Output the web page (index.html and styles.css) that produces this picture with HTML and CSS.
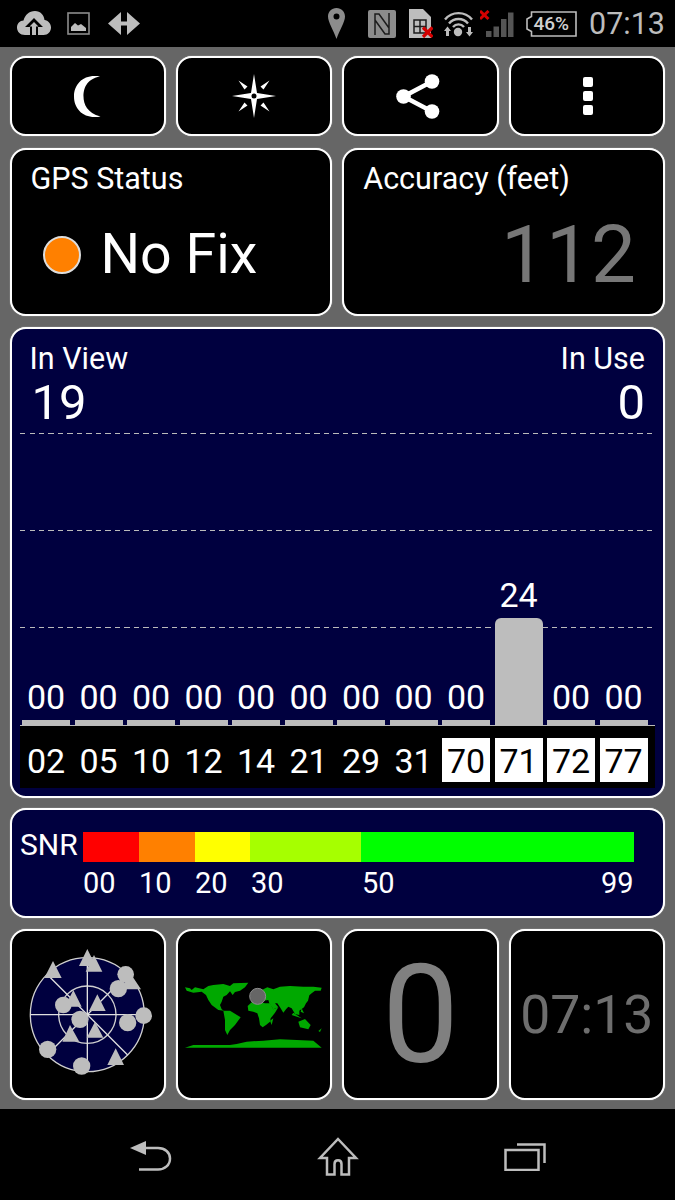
FILE: index.html
```html
<!DOCTYPE html>
<html lang="en">
<head>
  <meta charset="UTF-8" />
  <title>GPS Test</title>
  <link rel="stylesheet" href="styles.css">
</head>
<body>

<!-- Status bar -->
<div class="statusbar">
  <svg class="ic-cloud" width="34" height="24" viewBox="0 0 34 24"><path fill="#bdbdbd" d="M8 24C3 24 0 20.500 0 16.500C0 12.500 3 9.500 6.500 9.500C8 4 12 0 18 0C23.500 0 27 4 27.500 9C31 9.500 34 12.500 34 16.500C34 20.500 31 24 26.500 24Z"/><path fill="#000" d="M17 7L26 16H21V24H13V16H8Z"/><path fill="#bdbdbd" d="M15 24V15.500H12.500L17 11L21.500 15.500H19V24Z"/></svg>
  <svg class="ic-image" width="23" height="23" viewBox="0 0 23 23"><rect x="1" y="1" width="21" height="21" fill="none" stroke="#8c8c8c" stroke-width="1.600"/><path fill="#bdbdbd" d="M4 19V15L8 11L11 13.500L14 12L19 16V19Z"/></svg>
  <svg class="ic-arrows" width="32" height="23" viewBox="0 0 32 23"><path fill="#bdbdbd" d="M0 11.500L13 0V9.500H19V0L32 11.500L19 23V13.500H13V23Z"/></svg>
  <div class="status-right">
    <svg class="ic-pin" width="17" height="31" viewBox="0 0 17 31"><path fill="#8c8c8c" fill-rule="evenodd" d="M8.500 0C13.500 0 17 3.800 17 8.500C17 14 11.500 22 8.500 31C5.500 22 0 14 0 8.500C0 3.800 3.500 0 8.500 0ZM8.500 5.500A3 3 0 1 0 8.500 11.500A3 3 0 1 0 8.500 5.500Z"/></svg>
    <svg class="ic-nfc" width="28" height="28" viewBox="0 0 28 28"><rect width="28" height="28" rx="2" fill="#8c8c8c"/><path fill="none" stroke="#1c1c1c" stroke-width="1.500" d="M7 25V4H11L21 18M21 3V24H17L7 10"/></svg>
    <svg class="ic-sim" width="24" height="29" viewBox="0 0 24 29"><path fill="#bdbdbd" d="M0 0H14L22 8V29H0Z"/><path fill="none" stroke="#1c1c1c" stroke-width="1.500" d="M5 11H17V24H5ZM5 17.500H17M11 11V24"/><path fill="none" stroke="#d40000" stroke-width="3.200" d="M14 18.500L23.500 28M23.500 18.500L14 28"/></svg>
    <svg class="ic-wifi" width="29" height="26" viewBox="0 0 29 26"><g fill="none" stroke="#bdbdbd" stroke-width="2.400"><path d="M1 8.500C8 0 21 0 28 8.500"/><path d="M5 12.500C10 6.500 19 6.500 24 12.500"/><path d="M9 16C12 12.500 17 12.500 20 16"/></g><circle cx="14" cy="21" r="4.200" fill="#bdbdbd"/><path fill="#bdbdbd" d="M0 20L3.500 15.500L7 20H5V25H2V20ZM22 21H24V16H27V21H29L25.500 25.500Z"/></svg>
    <svg class="ic-signal" width="34" height="27" viewBox="0 0 34 27"><path stroke="#d40000" stroke-width="3" d="M0 1L8.500 9M8.500 1L0 9"/><g fill="#555"><rect x="6" y="21" width="5.500" height="6"/><rect x="13.500" y="16.500" width="5.500" height="10.500"/><rect x="21" y="9" width="5.500" height="18"/><rect x="28" y="2.500" width="5.500" height="24.500"/></g></svg>
    <div class="battery">
      <svg class="battery-shell" width="51" height="26" viewBox="0 0 51 26"><path fill="none" stroke="#bdbdbd" stroke-width="1.600" d="M5.500 1H50V25H5.500V20.500L1 18V8L5.500 5.500Z"/></svg>
      <span>46%</span>
    </div>
    <div class="clock">07:13</div>
  </div>
</div>

<div class="screen">

  <!-- Toolbar -->
  <div class="row-tools">
    <div class="card">
      <svg width="27" height="41" viewBox="0 0 27 41"><path fill="#fff" d="M26 0.500C12 3 9.500 13 9.500 20.500C9.500 28 13 37 26.500 40.500C25 41 23 41 20.500 41C8 41 0 32 0 20.500C0 9 8 0 20.500 0C23 0 24.500 0 26 0.500Z"/></svg>
    </div>
    <div class="card">
      <svg width="44" height="44" viewBox="0 0 44 44"><g fill="#fff"><path fill-rule="evenodd" d="M22 0L25 19L44 22L25 25L22 44L19 25L0 22L19 19ZM22 19.500A2.500 2.500 0 1 0 22 24.500A2.500 2.500 0 1 0 22 19.500Z"/><path d="M6.500 6.500L15.500 12.500L12.500 15.500ZM37.500 6.500L28.500 12.500L31.500 15.500ZM6.500 37.500L15.500 31.500L12.500 28.500ZM37.500 37.500L28.500 31.500L31.500 28.500Z"/></g></svg>
    </div>
    <div class="card">
      <svg class="ic-share" width="44" height="45" viewBox="0 0 44 45"><g fill="#fff"><circle cx="36" cy="7.500" r="7.300"/><circle cx="7.500" cy="22.500" r="7.300"/><circle cx="36" cy="37.500" r="7.300"/></g><path fill="none" stroke="#fff" stroke-width="4.500" d="M36 7.500L7.500 22.500L36 37.500"/></svg>
    </div>
    <div class="card">
      <div class="dots"><i></i><i></i><i></i></div>
    </div>
  </div>

  <!-- Status and accuracy -->
  <div class="row-info">
    <div class="card card-info">
      <div class="info-label">GPS Status</div>
      <div class="fix"><span class="fix-dot"></span><span class="fix-text">No Fix</span></div>
    </div>
    <div class="card card-info">
      <div class="info-label">Accuracy (feet)</div>
      <div class="accuracy">112</div>
    </div>
  </div>

  <!-- Signal chart -->
  <div class="card navy chart-panel">
    <div class="chart-head">
      <div class="head-col head-left"><span class="head-label">In View</span><span class="head-num">19</span></div>
      <div class="head-col head-right"><span class="head-label">In Use</span><span class="head-num">0</span></div>
    </div>
    <div class="grid-line gl1"></div>
    <div class="grid-line gl2"></div>
    <div class="grid-line gl3"></div>
    <div class="bars" id="bars"></div>
    <div class="labels" id="labels"></div>
  </div>

  <!-- SNR legend -->
  <div class="card navy snr-panel">
    <div class="snr-title">SNR</div>
    <div class="snr-body">
      <div class="snr-bar">
        <i class="seg s-red"></i><i class="seg s-orange"></i><i class="seg s-yellow"></i><i class="seg s-lime"></i><i class="seg s-green"></i>
      </div>
      <div class="snr-scale">
        <span class="tick t1">00</span><span class="tick t1">10</span><span class="tick t1">20</span><span class="tick t2">30</span><span class="tick t3">50</span><span class="tick">99</span>
      </div>
    </div>
  </div>

  <!-- Bottom tiles -->
  <div class="row-tiles">
    <div class="card">
      <svg class="sky" width="140" height="150" viewBox="0 0 420 450">
        <circle cx="202" cy="224" r="171" fill="#00003f" stroke="#d0d0d0" stroke-width="4"/>
        <circle cx="202" cy="224" r="86" fill="none" stroke="#d0d0d0" stroke-width="4"/>
        <path fill="none" stroke="#e0e0e0" stroke-width="4" d="M31 224H373M202 53V395M81 103L323 345M323 103L81 345"/>
        <g fill="#bdbdbd">
          <path d="M202 27L177 78H227ZM222 45L197 95H247ZM99 63L73 114H125ZM160 150L135 200H185ZM232 163L207 213H257ZM150 255L127 305H178ZM225 245L200 293H250ZM287 325L262 375H312ZM330 98L305 148H363Z"/>
          <circle cx="130" cy="195" r="25"/><circle cx="180" cy="238" r="26"/><circle cx="83" cy="328" r="26"/><circle cx="185" cy="378" r="26"/>
          <circle cx="323" cy="248" r="26"/><circle cx="371" cy="227" r="25"/><circle cx="317" cy="103" r="25"/><circle cx="295" cy="146" r="26"/>
        </g>
      </svg>
    </div>
    <div class="card">
      <svg class="world" width="150" height="90" viewBox="0 0 450 270">
        <g fill="#00a800">
          <path d="M15 52L30 55L35 60L45 52L70 58L85 48L100 45L130 42L150 48L160 40L205 38L195 52L180 62L165 66L158 75L150 64L140 75L130 80L125 95L120 105L125 118L132 122L115 120L95 105L85 90L78 75L65 65L40 68L20 62Z"/>
          <path d="M130 122L150 122L182 142L165 165L150 180L142 195L135 180L135 150Z"/>
          <path d="M203 108L215 97L235 95L255 100L270 100L280 118L295 112L285 128L272 145L270 155L258 165L248 172L240 165L237 145L232 130L220 125L205 122Z"/>
          <path d="M225 70L250 58L262 52L280 58L300 50L330 48L370 50L400 50L425 53L422 62L405 62L395 70L388 76L384 92L378 100L372 112L358 122L358 135L345 132L335 115L325 110L318 118L310 128L300 112L292 100L285 100L295 112L280 118L268 100L265 90L250 92L235 85L222 85Z"/>
          <path d="M355 155L375 147L392 165L385 178L360 172Z"/>
          <path d="M270 152L280 145L275 165ZM415 183L425 175L420 186ZM340 128L365 145L335 135ZM365 115L372 130L362 125ZM128 48L140 50L135 60ZM108 50L122 52L112 58Z"/>
          <path d="M15 233L40 225L100 225L150 225L170 222L200 215L250 212L300 208L400 212L425 233Z"/>
        </g>
        <circle cx="233" cy="79" r="24" fill="#666" stroke="#8c8c8c" stroke-width="3"/>
      </svg>
    </div>
    <div class="card tile-big">0</div>
    <div class="card tile-time">07:13</div>
  </div>
</div>

<!-- Navigation bar -->
<div class="navbar">
  <svg width="42" height="31" viewBox="0 0 42 31"><path fill="#bdbdbd" d="M0 7L16 0V14Z"/><path fill="none" stroke="#bdbdbd" stroke-width="2.500" d="M14 7H28C35 7 40 11.500 40 17.500C40 24 35 28.500 28 28.500H9"/></svg>
  <svg width="42" height="39" viewBox="0 0 42 39"><path fill="none" stroke="#bdbdbd" stroke-width="2.500" stroke-linejoin="miter" d="M21 2L39 21H32V37.500H24.500V27C24.500 22 17.500 22 17.500 27V37.500H10V21H3Z"/></svg>
  <svg width="42" height="28" viewBox="0 0 42 28"><g fill="none" stroke="#bdbdbd" stroke-width="2.500"><rect x="1.500" y="7" width="33" height="20"/><path d="M13 1.500H40.500V20"/></g></svg>
</div>

<script>
  // sat id, snr, used flag
  var sats = [
    ["02", "00", 0], ["05", "00", 0], ["10", "00", 0], ["12", "00", 0],
    ["14", "00", 0], ["21", "00", 0], ["29", "00", 0], ["31", "00", 0],
    ["70", "00", 1], ["71", "24", 1], ["72", "00", 1], ["77", "00", 1]
  ];

  var bars = document.getElementById("bars");
  var labels = document.getElementById("labels");

  sats.forEach(function (s) {
    var tall = s[1] !== "00";
    var h = tall ? 107 : 5;
    bars.innerHTML += '<div class="bar-col"><span class="bar-val">' + s[1] + '</span><div class="bar' + (tall ? " bar-tall" : "") + '" style="height:' + h + 'px"></div></div>';
    labels.innerHTML += '<div class="sat' + (s[2] ? " sat-on" : "") + '">' + s[0] + '</div>';
  });
</script>

</body>
</html>
```

FILE: styles.css
```css
/* Global Styling */
* {
  box-sizing: border-box;
}

body {
  margin: 0;
  width: 675px;
  height: 1200px;
  overflow: hidden;
  background: #666;
  font-family: Roboto, sans-serif;
  color: #fff;
  display: flex;
  flex-direction: column;
}

/* Status bar */
.statusbar {
  height: 47px;
  background: #000;
  display: flex;
  align-items: center;
  padding: 0 12px 0 17px;
  flex-shrink: 0;
}

.ic-cloud {
  margin-top: -1px;
  margin-right: 16px;
}

.ic-image {
  margin-right: 18px;
}

.status-right {
  margin-left: auto;
  display: flex;
  align-items: center;
}

.ic-pin {
  margin-right: 23px;
}

.ic-nfc {
  margin-right: 13px;
}

.ic-sim {
  margin-right: 11px;
}

.ic-wifi {
  margin-right: 7px;
}

.ic-signal {
  margin-right: 12px;
}

.battery {
  position: relative;
  width: 51px;
  height: 26px;
  margin-right: 12px;
  display: flex;
  align-items: center;
  justify-content: flex-end;
  padding-right: 8px;
  font-size: 19px;
  font-weight: 500;
  color: #d0d0d0;
}

.battery-shell {
  position: absolute;
  left: 0;
  top: 0;
}

.clock {
  font-size: 30.500px;
  line-height: 36px;
  padding-top: 1px;
  color: #bdbdbd;
  width: 74px;
  white-space: nowrap;
}

/* Main area */
.screen {
  flex: 1;
  padding: 9px 10px 9px 9.500px;
  display: flex;
  flex-direction: column;
}

.card {
  background: #000;
  border: 2px solid #fff;
  border-radius: 16px;
  box-shadow: 0 0 1px rgba(255, 255, 255, 0.8);
  display: flex;
  align-items: center;
  justify-content: center;
}

.navy {
  background: #00003f;
}

.row-tools {
  height: 80px;
  display: grid;
  grid-template-columns: repeat(4, 1fr);
  column-gap: 10px;
  margin-bottom: 12px;
}

.ic-share {
  margin-right: 5px;
}

.dots {
  display: flex;
  flex-direction: column;
  gap: 4px;
  margin-left: 2px;
}

.dots i {
  width: 10px;
  height: 10px;
  border-radius: 2px;
  background: #fff;
}

.row-info {
  height: 168px;
  display: grid;
  grid-template-columns: 1fr 1fr;
  column-gap: 10px;
  margin-bottom: 11px;
}

.card-info {
  flex-direction: column;
  align-items: stretch;
  justify-content: flex-start;
  padding: 12px 18px 0 19px;
}

.info-label {
  font-size: 30.500px;
  line-height: 34px;
}

.fix {
  display: flex;
  align-items: center;
  margin-top: 26px;
  padding-left: 12px;
}

.fix-dot {
  width: 38px;
  height: 38px;
  border-radius: 50%;
  background: #ff8000;
  border: 2px solid #ddd;
  margin-right: 20px;
}

.fix-text {
  font-size: 55.500px;
  line-height: 64px;
  padding-top: 1px;
}

.accuracy {
  font-size: 80px;
  line-height: 92px;
  color: #777;
  text-align: right;
  padding-right: 9px;
  margin-top: 13px;
}

/* Chart */
.chart-panel {
  position: relative;
  height: 471px;
  margin-bottom: 10px;
  flex-direction: column;
  align-items: stretch;
  justify-content: flex-start;
  padding: 0 8px 8px;
}

.chart-head {
  flex: 1;
  display: flex;
  justify-content: space-between;
  padding: 13px 10px 0;
}

.head-col {
  display: flex;
  flex-direction: column;
}

.head-left .head-num {
  margin-left: 2px;
}

.head-right {
  align-items: flex-end;
}

.head-label {
  font-size: 30.500px;
  line-height: 34px;
}

.head-num {
  font-size: 49px;
  line-height: 52px;
  margin-top: 1px;
}

.grid-line {
  position: absolute;
  left: 8px;
  width: 633px;
  height: 1px;
  background: repeating-linear-gradient(90deg, #bbb 0 5px, transparent 5px 9.500px);
}

.gl1 {
  top: 104px;
}

.gl2 {
  top: 201px;
}

.gl3 {
  top: 298px;
}

.bars {
  position: relative;
  display: grid;
  grid-template-columns: repeat(12, 48px);
  column-gap: 4.500px;
  padding: 0 2.500px;
  border-bottom: 1px solid #bbb;
}

.bar-col {
  display: flex;
  flex-direction: column;
  align-items: center;
  justify-content: flex-end;
}

.bar-val {
  font-size: 34px;
  line-height: 42px;
  margin-bottom: 2px;
}

.bar {
  width: 48px;
  background: #bdbdbd;
}

.bar-tall {
  border-radius: 6px 6px 0 0;
}

.labels {
  height: 62px;
  background: #000;
  display: grid;
  grid-template-columns: repeat(12, 48px);
  column-gap: 4.500px;
  padding: 12px 2.500px 6px;
}

.sat {
  display: flex;
  align-items: center;
  justify-content: center;
  padding-top: 2px;
  font-size: 34px;
  color: #fff;
}

.sat-on {
  background: #fff;
  color: #000;
}

/* SNR legend */
.snr-panel {
  height: 110px;
  margin-bottom: 11px;
  align-items: flex-start;
  justify-content: flex-start;
  padding: 22px 0 0 8.500px;
}

.snr-title {
  width: 63px;
  margin-top: -2px;
  font-size: 30px;
  line-height: 30px;
}

.snr-body {
  width: 551px;
}

.snr-bar {
  height: 30px;
  display: flex;
}

.seg {
  display: block;
  height: 100%;
}

.s-red {
  width: 56px;
  background: #f00;
}

.s-orange {
  width: 56px;
  background: #ff8000;
}

.s-yellow {
  width: 55px;
  background: #ff0;
}

.s-lime {
  width: 111px;
  background: #a6ff00;
}

.s-green {
  flex: 1;
  background: #0f0;
}

.snr-scale {
  display: flex;
  justify-content: flex-start;
  margin-top: 5px;
}

.tick {
  font-size: 29px;
  line-height: 32px;
}

.t1 {
  width: 56px;
}

.t2 {
  width: 111px;
}

.t3 {
  width: 239px;
}

/* Bottom tiles */
.row-tiles {
  height: 171px;
  display: grid;
  grid-template-columns: repeat(4, 1fr);
  column-gap: 10px;
}

.sky {
  margin-left: 5px;
}

.world {
  margin-left: 2px;
}

.tile-big {
  font-size: 137px;
  color: #808080;
}

.tile-time {
  font-size: 53.500px;
  color: #6e6e6e;
}

/* Navigation bar */
.navbar {
  height: 91px;
  background: #000;
  flex-shrink: 0;
  display: flex;
  align-items: center;
  justify-content: space-between;
  padding: 4px 129px 0 130px;
}
```
